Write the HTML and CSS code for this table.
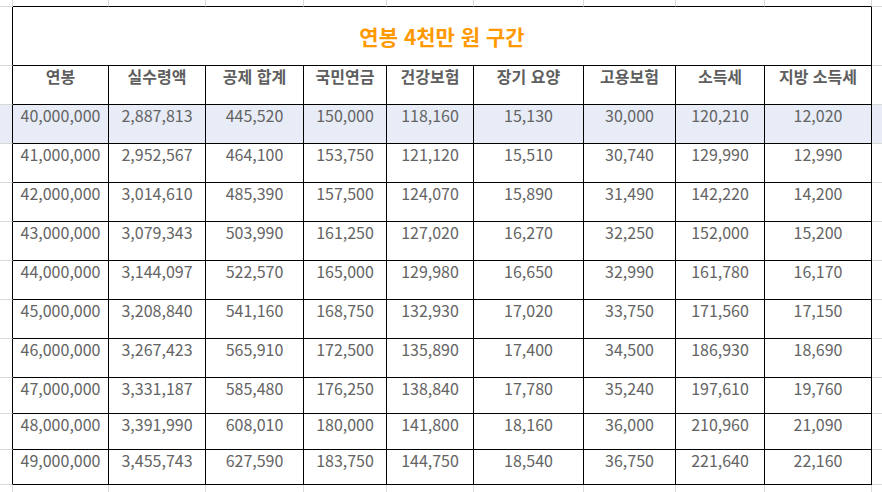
FILE: index.html
```html
<!DOCTYPE html>
<html lang="ko">
<head>
<meta charset="utf-8">
<title>연봉 4천만 원 구간</title>
<link rel="stylesheet" href="styles.css">
</head>
<body>
<div class="sheet">
  <!-- row 0: above table -->
  <div class="g"></div>
  <div class="tt"></div><div class="tt"></div><div class="tt"></div><div class="tt"></div><div class="tt"></div><div class="tt"></div><div class="tt"></div><div class="tt"></div><div class="tt"></div>
  <div class="gr"></div>

  <!-- title -->
  <div class="gl"></div>
  <div class="c title">연봉 4천만 원 구간</div>
  <div class="gr"></div>

  <!-- header -->
  <div class="gl"></div>
  <div class="c h">연봉</div><div class="c h">실수령액</div><div class="c h">공제 합계</div><div class="c h">국민연금</div><div class="c h">건강보험</div><div class="c h">장기 요양</div><div class="c h">고용보험</div><div class="c h">소득세</div><div class="c h">지방 소득세</div>
  <div class="gr"></div>

  <div class="gl sel"></div>
  <div class="c sel">40,000,000</div><div class="c sel">2,887,813</div><div class="c sel">445,520</div><div class="c sel">150,000</div><div class="c sel">118,160</div><div class="c sel">15,130</div><div class="c sel">30,000</div><div class="c sel">120,210</div><div class="c sel">12,020</div>
  <div class="gr sel"></div>

  <div class="gl"></div>
  <div class="c">41,000,000</div><div class="c">2,952,567</div><div class="c">464,100</div><div class="c">153,750</div><div class="c">121,120</div><div class="c">15,510</div><div class="c">30,740</div><div class="c">129,990</div><div class="c">12,990</div>
  <div class="gr"></div>

  <div class="gl"></div>
  <div class="c">42,000,000</div><div class="c">3,014,610</div><div class="c">485,390</div><div class="c">157,500</div><div class="c">124,070</div><div class="c">15,890</div><div class="c">31,490</div><div class="c">142,220</div><div class="c">14,200</div>
  <div class="gr"></div>

  <div class="gl"></div>
  <div class="c">43,000,000</div><div class="c">3,079,343</div><div class="c">503,990</div><div class="c">161,250</div><div class="c">127,020</div><div class="c">16,270</div><div class="c">32,250</div><div class="c">152,000</div><div class="c">15,200</div>
  <div class="gr"></div>

  <div class="gl"></div>
  <div class="c">44,000,000</div><div class="c">3,144,097</div><div class="c">522,570</div><div class="c">165,000</div><div class="c">129,980</div><div class="c">16,650</div><div class="c">32,990</div><div class="c">161,780</div><div class="c">16,170</div>
  <div class="gr"></div>

  <div class="gl"></div>
  <div class="c">45,000,000</div><div class="c">3,208,840</div><div class="c">541,160</div><div class="c">168,750</div><div class="c">132,930</div><div class="c">17,020</div><div class="c">33,750</div><div class="c">171,560</div><div class="c">17,150</div>
  <div class="gr"></div>

  <div class="gl"></div>
  <div class="c">46,000,000</div><div class="c">3,267,423</div><div class="c">565,910</div><div class="c">172,500</div><div class="c">135,890</div><div class="c">17,400</div><div class="c">34,500</div><div class="c">186,930</div><div class="c">18,690</div>
  <div class="gr"></div>

  <div class="gl"></div>
  <div class="c">47,000,000</div><div class="c">3,331,187</div><div class="c">585,480</div><div class="c">176,250</div><div class="c">138,840</div><div class="c">17,780</div><div class="c">35,240</div><div class="c">197,610</div><div class="c">19,760</div>
  <div class="gr"></div>

  <div class="gl"></div>
  <div class="c">48,000,000</div><div class="c">3,391,990</div><div class="c">608,010</div><div class="c">180,000</div><div class="c">141,800</div><div class="c">18,160</div><div class="c">36,000</div><div class="c">210,960</div><div class="c">21,090</div>
  <div class="gr"></div>

  <div class="gl"></div>
  <div class="c">49,000,000</div><div class="c">3,455,743</div><div class="c">627,590</div><div class="c">183,750</div><div class="c">144,750</div><div class="c">18,540</div><div class="c">36,750</div><div class="c">221,640</div><div class="c">22,160</div>
  <div class="gr"></div>

  <!-- below table -->
  <div class="bt"></div>
  <div class="bt"></div><div class="bt"></div><div class="bt"></div><div class="bt"></div><div class="bt"></div><div class="bt"></div><div class="bt"></div><div class="bt"></div><div class="bt"></div>
  <div class="bt gr"></div>
</div>
</body>
</html>
```

FILE: styles.css
```css
html, body {
  margin: 0;
  padding: 0;
  background: #ffffff;
}

.sheet {
  width: 882px;
  height: 492px;
  display: grid;
  grid-template-columns: 13px 96px 97px 98px 83px 87px 110px 92px 89px 107px 1fr;
  grid-template-rows: 7px 59px 39px repeat(7, 39px) 36px 36px 35px 1fr;
  font-family: "Noto Sans CJK KR", "Noto Sans", sans-serif;
  overflow: hidden;
}

.sheet > div {
  box-sizing: border-box;
  border-right: 1px solid #dadada;
  border-bottom: 1px solid #dadada;
  min-width: 0;
}

.sheet > .tt {
  border-bottom-color: #000000;
}

.sheet > .gl {
  border-right-color: #000000;
}

.sheet > .gr {
  border-right: none;
}

.sheet > .bt {
  border-bottom: none;
}

.sheet > .c {
  border-right-color: #000000;
  border-bottom-color: #000000;
  color: #646464;
  font-size: 16px;
  line-height: 20px;
  text-align: center;
  padding-top: 0;
  white-space: nowrap;
}

.sheet > .h {
  font-weight: 700;
  color: #5e5e5e;
}

.sheet > .title {
  grid-column: span 9;
  display: flex;
  align-items: center;
  justify-content: center;
  padding-top: 0;
  color: #ff9900;
  font-size: 21px;
  font-weight: 700;
  line-height: 24px;
}

.sheet > .sel {
  background: #e7ecf7;
}
```
